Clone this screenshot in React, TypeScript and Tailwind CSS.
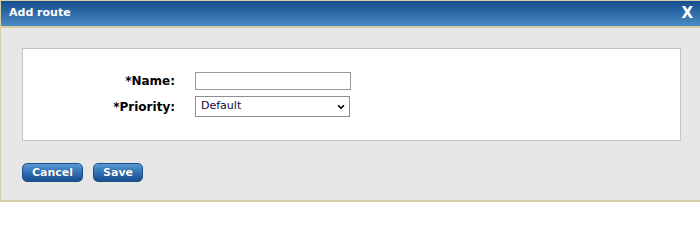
import { ChevronDown } from 'lucide-react';

const font = { fontFamily: 'Verdana, "DejaVu Sans", sans-serif' };

function DialogButton({ label }: { label: string }) {
  return (
    <button
      type="button"
      className="h-[19px] rounded-[5px] border border-[#1d4f86] bg-gradient-to-b from-[#5b9ad6] via-[#2f6fb3] to-[#1a4f90] px-[9px] text-[11px] font-bold leading-[17px] text-white [text-shadow:0_0_1px_#0b2e5c]"
    >
      {label}
    </button>
  );
}

export default function App() {
  return (
    <div
      className="flex h-[202px] w-[700px] flex-col border-t border-b-2 border-l border-[#d6cfa6] bg-[#e7e7e7]"
      style={font}
    >
      <div className="flex h-[27px] shrink-0 items-center justify-between border-b-2 border-[#d6cfa6] bg-gradient-to-b from-[#154d8d] to-[#4b8bc6] pl-[8px] pr-[7px]">
        <span className="text-[11px] font-bold text-white">Add route</span>
        <span className="text-[15px] font-bold leading-none text-white">X</span>
      </div>

      <div className="flex flex-1 flex-col pl-[21px] pr-[19px] pt-[20px]">
        <div className="h-[93px] border border-[#c4c4c4] bg-white pt-[23px]">
          <div className="grid grid-cols-[152px_auto] items-center gap-x-[20px] gap-y-[6px]">
            <label className="text-right text-[12px] font-bold leading-[14px] text-black">*Name:</label>
            <input
              type="text"
              className="block h-[18px] w-[156px] border border-[#9a9a9a] bg-white px-1 text-[11px] outline-none"
            />
            <label className="text-right text-[12px] font-bold leading-[14px] text-black">*Priority:</label>
            <div className="relative h-[21px] w-[155px]">
              <select
                defaultValue="Default"
                className="block h-full w-full appearance-none border border-[#8f8f8f] bg-white pl-[5px] text-[11px] text-[#0a0a40] outline-none"
                style={font}
              >
                <option>Default</option>
              </select>
              <ChevronDown
                className="pointer-events-none absolute right-[4px] top-[6px] h-[10px] w-[10px] text-black"
                strokeWidth={4}
              />
            </div>
          </div>
        </div>

        <div className="mt-[22px] flex gap-[10px]">
          <DialogButton label="Cancel" />
          <DialogButton label="Save" />
        </div>
      </div>
    </div>
  );
}
